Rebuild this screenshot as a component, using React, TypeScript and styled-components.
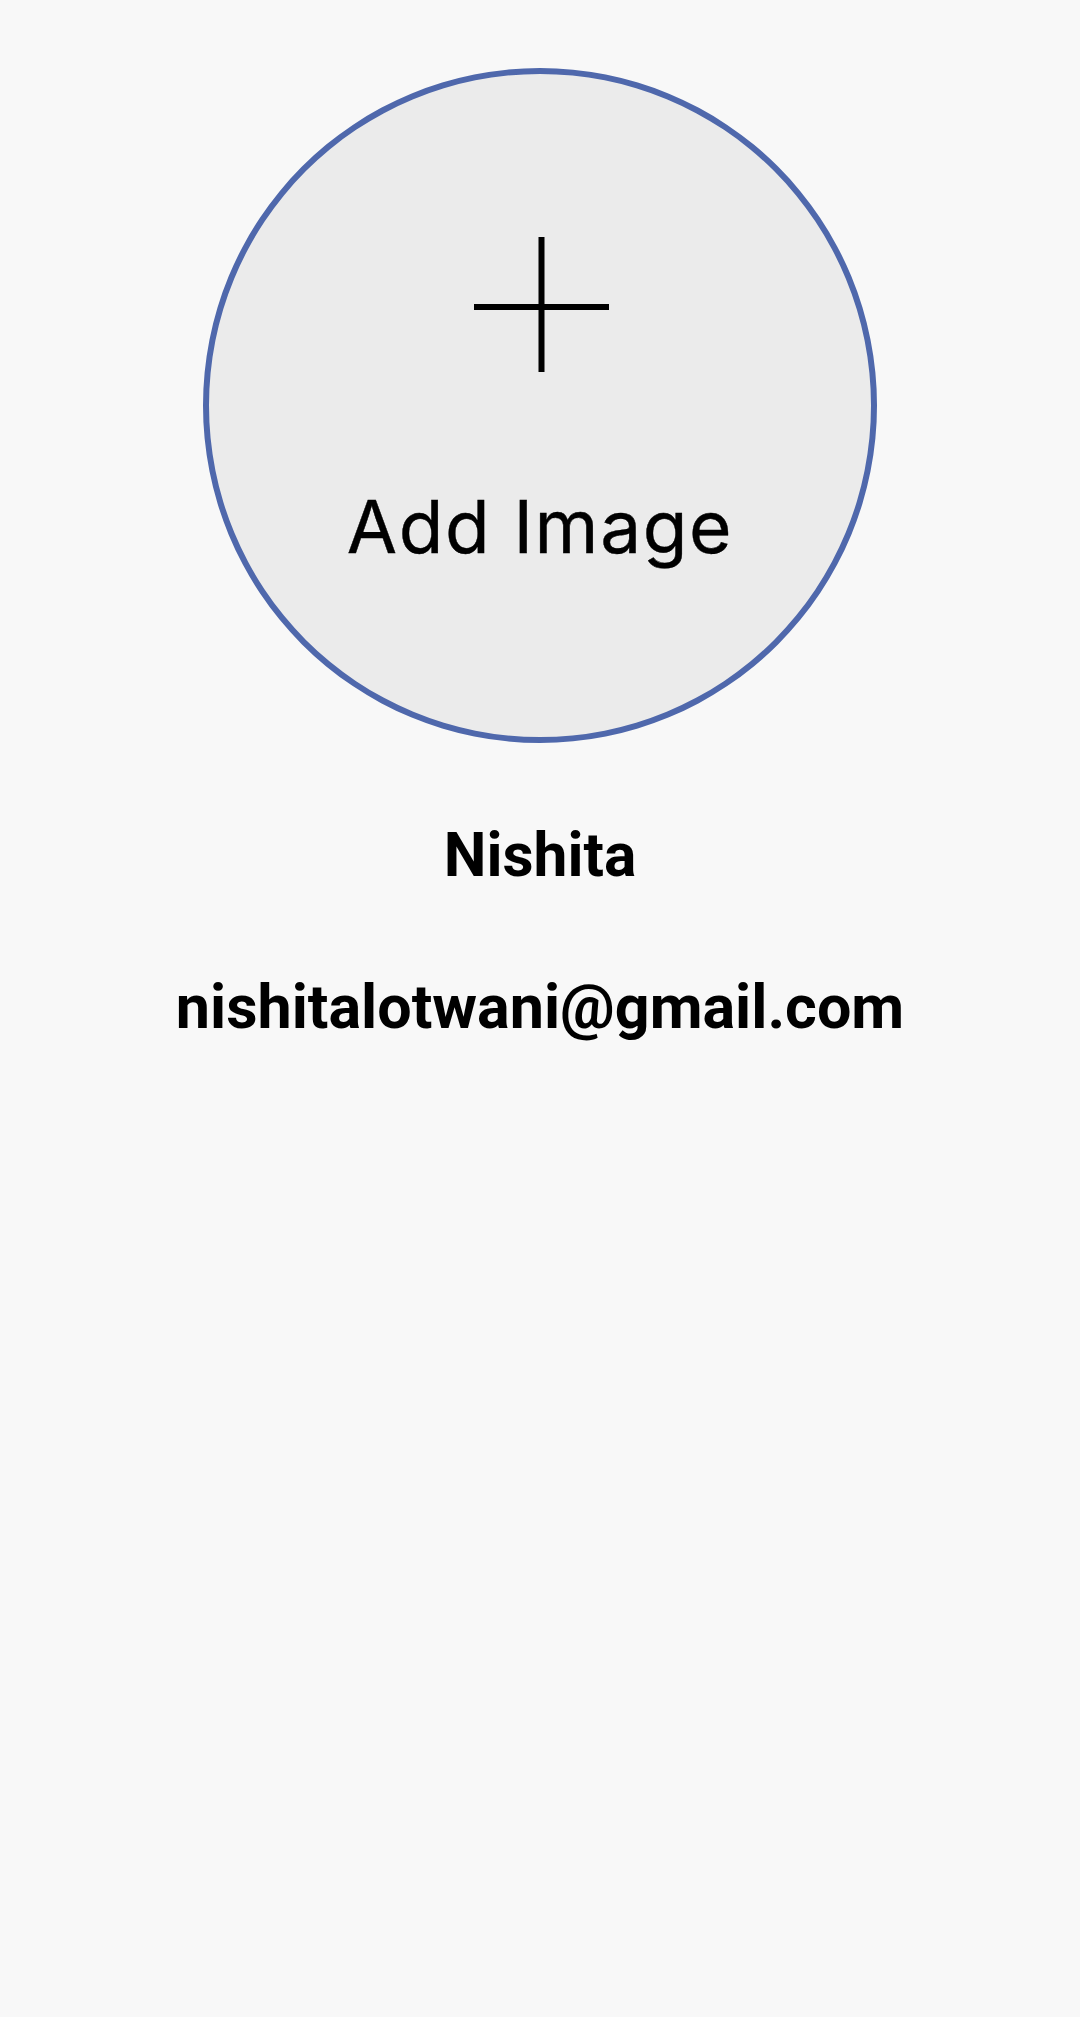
import React from "react";
import styled, { createGlobalStyle } from "styled-components";

const GlobalStyle = createGlobalStyle`
  html, body {
    margin: 0;
    padding: 0;
    background: #f8f8f8;
  }
  * { box-sizing: border-box; }
`;

const Page = styled.main`
  min-height: 2017px;
  width: 1080px;
  background: #f8f8f8;
  display: flex;
  flex-direction: column;
  align-items: center;
  padding-top: 68px;
`;

const AvatarButton = styled.button`
  width: 674px;
  height: 675px;
  border-radius: 50%;
  border: 6px solid #4f68ac;
  background: #ebebeb;
  display: flex;
  flex-direction: column;
  align-items: center;
  padding: 163px 0 0 0;
  margin: 0;
  cursor: pointer;
`;

const PlusIcon = styled.svg`
  width: 135px;
  height: 135px;
  display: block;
  margin-left: 2px;
`;

const AddLabel = styled.span`
  margin-top: 118px;
  font-family: Inter, "Noto Sans", sans-serif;
  font-weight: 400;
  font-size: 73px;
  line-height: 1;
  color: #000;
  letter-spacing: 1.6px;
  -webkit-text-stroke: 0.4px #000;
`;

const Name = styled.h1`
  margin: 83px 0 0 0;
  font-family: Roboto, "Liberation Sans", sans-serif;
  font-weight: 700;
  font-size: 60.5px;
  line-height: 1;
  color: #000;
`;

const Email = styled.p`
  margin: 90px 0 0 0;
  font-family: Roboto, "Liberation Sans", sans-serif;
  font-weight: 700;
  font-size: 61px;
  line-height: 1;
  color: #000;
`;

export default function App() {
  return (
    <>
      <GlobalStyle />
      <Page>
        <AvatarButton type="button" aria-label="Add Image">
          <PlusIcon viewBox="0 0 135 135">
            <line x1="0" y1="70" x2="135" y2="70" stroke="#000" strokeWidth="6" />
            <line x1="67.5" y1="0" x2="67.5" y2="135" stroke="#000" strokeWidth="6" />
          </PlusIcon>
          <AddLabel>Add Image</AddLabel>
        </AvatarButton>
        <Name>Nishita</Name>
        <Email>nishitalotwani@gmail.com</Email>
      </Page>
    </>
  );
}
